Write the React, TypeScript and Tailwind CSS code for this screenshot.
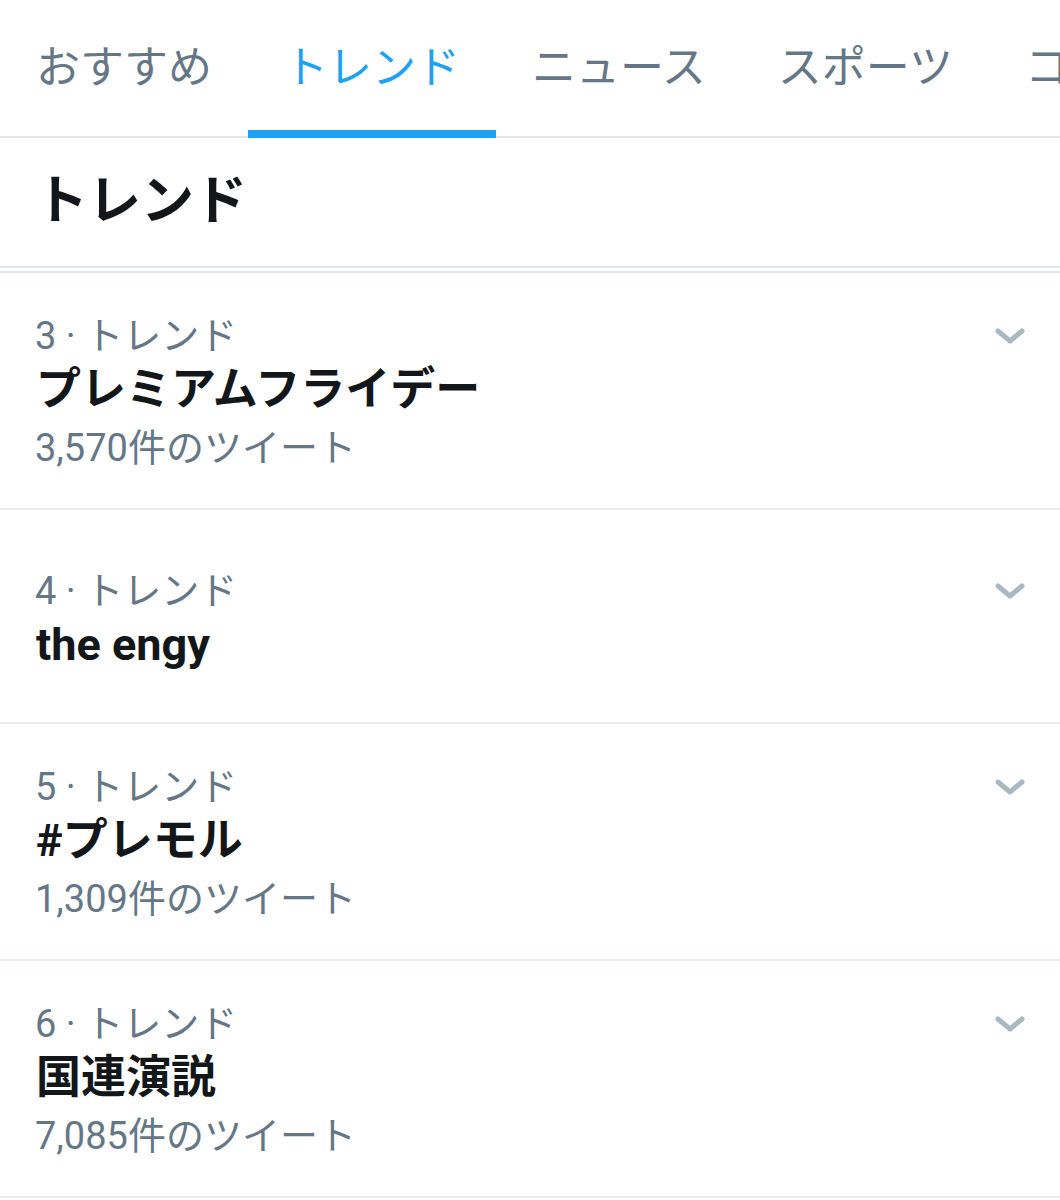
import React from "react";

const tabs = ["おすすめ", "トレンド", "ニュース", "スポーツ", "コメディ"];

type Trend = {
  rank: number;
  name: string;
  count?: string;
};

const trends: Trend[] = [
  { rank: 3, name: "プレミアムフライデー", count: "3,570件のツイート" },
  { rank: 4, name: "the engy" },
  { rank: 5, name: "#プレモル", count: "1,309件のツイート" },
  { rank: 6, name: "国連演説", count: "7,085件のツイート" },
];

function Chevron() {
  return (
    <svg width="32" height="18" viewBox="0 0 32 18" fill="none" className="shrink-0">
      <path
        d="M4 4 L16 14 L28 4"
        stroke="#AAB8C2"
        strokeWidth="5"
        strokeLinecap="round"
        strokeLinejoin="round"
      />
    </svg>
  );
}

function TrendRow({ trend }: { trend: Trend }) {
  return (
    <div className="flex min-h-[214px] flex-col justify-center border-b-2 border-[#E6ECF0] pl-[35px] pr-[34px] pt-[38px] pb-[31px]">
      <div className="flex items-center justify-between">
        <div className="text-[38px] leading-[50px] text-[#657786]">
          {trend.rank} · トレンド
        </div>
        <Chevron />
      </div>
      <div className="pl-[1px] text-[45px] font-bold leading-[58px] text-[#14171A]">
        {trend.name}
      </div>
      {trend.count && (
        <div className="text-[38px] leading-[58px] text-[#657786]">
          {trend.count}
        </div>
      )}
    </div>
  );
}

export default function App() {
  return (
    <div
      className="h-[1200px] w-[1060px] overflow-hidden bg-white"
      style={{ fontFamily: "Roboto, 'Noto Sans CJK JP', sans-serif" }}
    >
      {/* Tabs */}
      <div className="flex h-[138px] border-b-2 border-[#E1E8ED] whitespace-nowrap">
        {tabs.map((tab) => {
          const active = tab === "トレンド";
          return (
            <div
              key={tab}
              className={`relative h-full shrink-0 px-[36px] pt-[46px] text-[44px] leading-[44px] ${
                active ? "text-[#1DA1F2]" : "text-[#657786]"
              }`}
            >
              {tab}
              {active && (
                <span className="absolute left-0 right-0 bottom-[-2px] h-[8px] bg-[#1DA1F2]" />
              )}
            </div>
          );
        })}
      </div>

      {/* Section header */}
      <div className="flex h-[130px] items-center border-b-2 border-[#E1E8ED] pl-[35px] text-[53px] font-bold text-[#14171A]">
        トレンド
      </div>

      {/* Trend list */}
      <div className="mt-[3px] border-t-2 border-[#E1E8ED]">
        {trends.map((trend) => (
          <TrendRow key={trend.rank} trend={trend} />
        ))}
      </div>
    </div>
  );
}
